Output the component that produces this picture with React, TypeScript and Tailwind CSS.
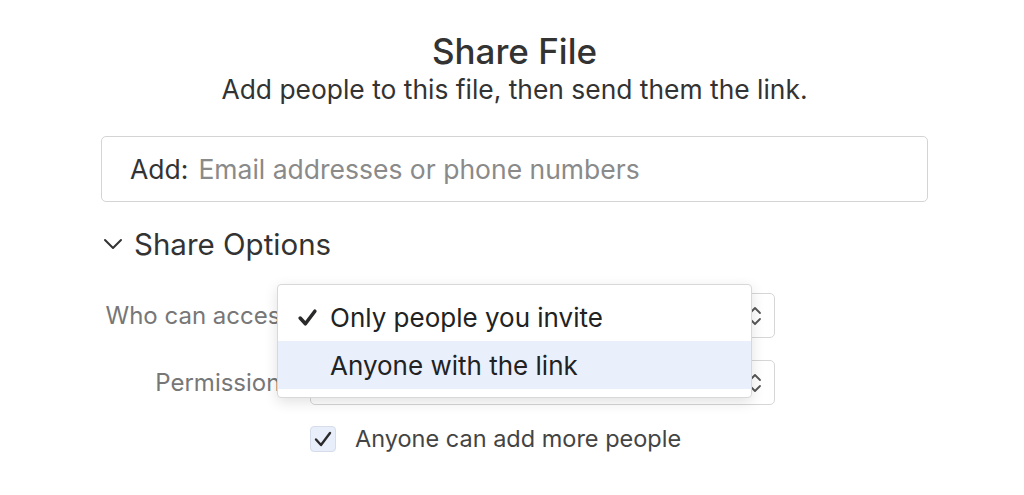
import React from 'react';

const font = { fontFamily: 'Inter, "Noto Sans", sans-serif' };

const UpDown: React.FC = () => (
    <svg width="14" height="24" viewBox="0 0 14 24" fill="none" stroke="#555" strokeWidth="1.8" strokeLinecap="round" strokeLinejoin="round">
        <path d="M2 9 L7 4 L12 9" />
        <path d="M2 15 L7 20 L12 15" />
    </svg>
);

const Check: React.FC<{ size?: number; width?: number }> = ({ size = 20, width = 2.6 }) => (
    <svg width={size} height={size} viewBox="0 0 20 20" fill="none" stroke="#2a2a2a" strokeWidth={width} strokeLinecap="round" strokeLinejoin="round">
        <path d="M3 10.5 L8 16 L17 4" />
    </svg>
);

const Select: React.FC<{ value: string }> = ({ value }) => (
    <div className="w-[465px] h-[45px] border border-[#d6d6d6] rounded-[5px] bg-white flex items-center justify-between pl-[20px] pr-[12px]">
        <span className="text-[25px] leading-[30px] text-[#333]">{value}</span>
        <UpDown />
    </div>
);

const App: React.FC = () => {
    return (
        <div className="w-[1024px] h-[495px] bg-white overflow-hidden" style={font}>
            <div className="ml-[101px] w-[827px] pt-[30px]">
                <h1 className="text-center text-[35px] leading-[42px] font-medium text-[#333]">Share File</h1>
                <p className="text-center text-[26.4px] leading-[32px] text-[#333] mt-[1px]">Add people to this file, then send them the link.</p>

                <div className="mt-[31px] h-[66px] border border-[#d4d4d4] rounded-[5px] flex items-center px-[28px] text-[26.5px] leading-[32px]">
                    <span className="text-[#333]">Add:</span>
                    <span className="ml-[10px] text-[#8a8a8a]">Email addresses or phone numbers</span>
                </div>

                <div className="mt-[24px] flex items-center gap-[10px] text-[29.5px] text-[#333] leading-[36px]">
                    <svg width="22" height="14" viewBox="0 0 22 14" fill="none" stroke="#333" strokeWidth="2" strokeLinecap="round" strokeLinejoin="round" className="ml-[1px]">
                        <path d="M3 3 L11 11 L19 3" />
                    </svg>
                    <span>Share Options</span>
                </div>

                <div className="mt-[31px] grid grid-cols-[199px_465px] gap-x-[10px] gap-y-[22px] items-center">
                    <span className="text-right text-[24px] leading-[30px] text-[#777]">Who can access:</span>
                    <div className="relative">
                        <Select value="Only people you invite" />
                        <div className="absolute left-[-33px] top-[-9px] w-[475px] bg-white border border-[#d8d8d8] rounded-[4px] shadow-[0_4px_14px_rgba(0,0,0,0.12)] py-[8px] z-10">
                            <div className="h-[48px] flex items-center text-[26px] text-[#222]">
                                <span className="w-[52px] flex justify-end pr-[12px]"><Check size={21} width={3.4} /></span>
                                <span>Only people you invite</span>
                            </div>
                            <div className="h-[48px] flex items-center text-[26px] text-[#222] bg-[#e9f0fc]">
                                <span className="w-[52px]" />
                                <span>Anyone with the link</span>
                            </div>
                        </div>
                    </div>
                    <span className="text-right text-[24px] leading-[30px] text-[#777]">Permissions:</span>
                    <Select value="Can make changes" />
                </div>

                <div className="mt-[19px] ml-[209px] flex items-center gap-[19px]">
                    <div className="w-[26px] h-[26px] rounded-[4px] bg-[#e8eefa] border border-[#d5dcea] flex items-center justify-center">
                        <Check size={20} width={2.4} />
                    </div>
                    <span className="text-[23.5px] leading-[30px] text-[#444]">Anyone can add more people</span>
                </div>
            </div>
        </div>
    );
};

export default App;
